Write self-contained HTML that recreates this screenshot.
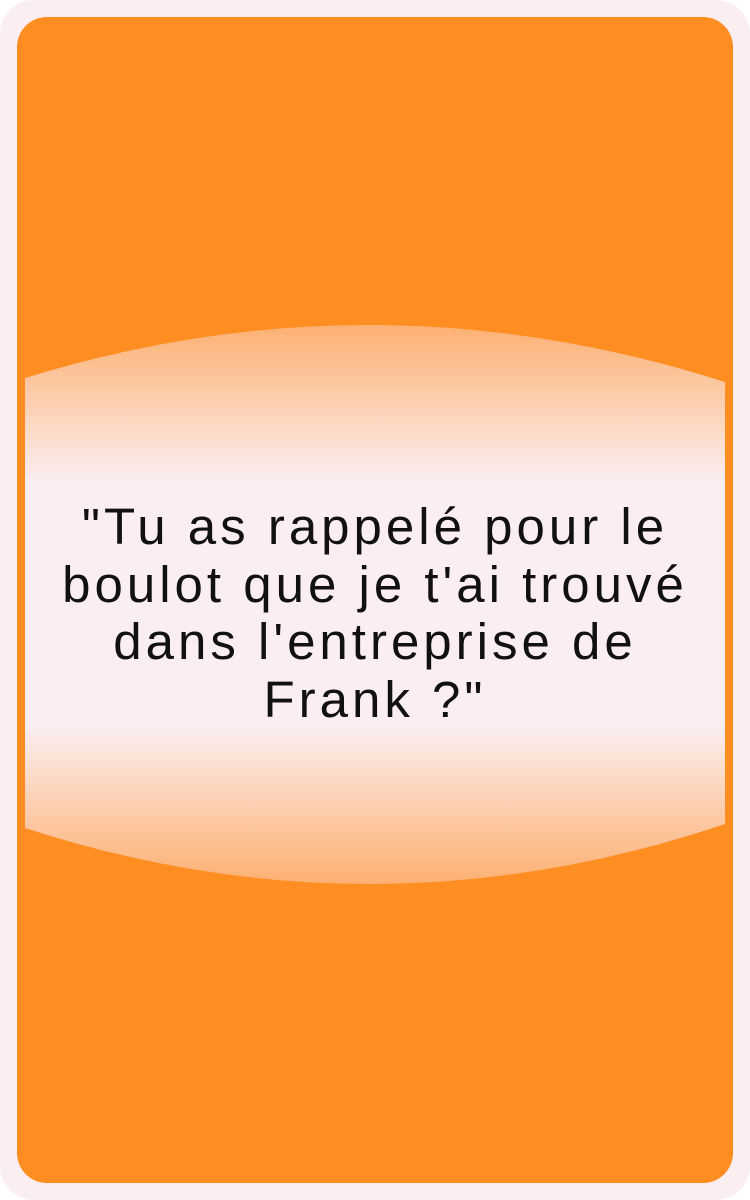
<!DOCTYPE html>
<html><head><style>
html,body{margin:0;padding:0;background:#fff;}
.wrap{position:relative;width:750px;height:1200px;}
svg{position:absolute;left:0;top:0;}
.t{position:absolute;left:0;top:498px;width:750px;text-align:center;font-family:"Liberation Sans",sans-serif;font-size:51px;letter-spacing:4px;line-height:57.5px;color:#111;}
</style></head><body>
<div class="wrap">
<svg width="750" height="1200" viewBox="0 0 750 1200">
<defs>
<linearGradient id="g" x1="0" y1="324" x2="0" y2="884" gradientUnits="userSpaceOnUse">
<stop offset="0" stop-color="#fdb071"/>
<stop offset="0.28" stop-color="#fbeef0"/>
<stop offset="0.72" stop-color="#fbeef0"/>
<stop offset="1" stop-color="#fdb071"/>
</linearGradient>
</defs>
<rect x="0" y="0" width="750" height="1200" rx="34" fill="#fbeef0"/>
<rect x="17" y="17" width="716" height="1166" rx="30" fill="#fe8d22"/>
<path d="M25,378 Q375,270 725,382 L725,824 Q375,942 25,828 Z" fill="url(#g)"/>
</svg>
<div class="t">"Tu as rappelé pour le<br>boulot que je t'ai trouvé<br>dans l'entreprise de<br>Frank ?"</div>
</div>
</body></html>
